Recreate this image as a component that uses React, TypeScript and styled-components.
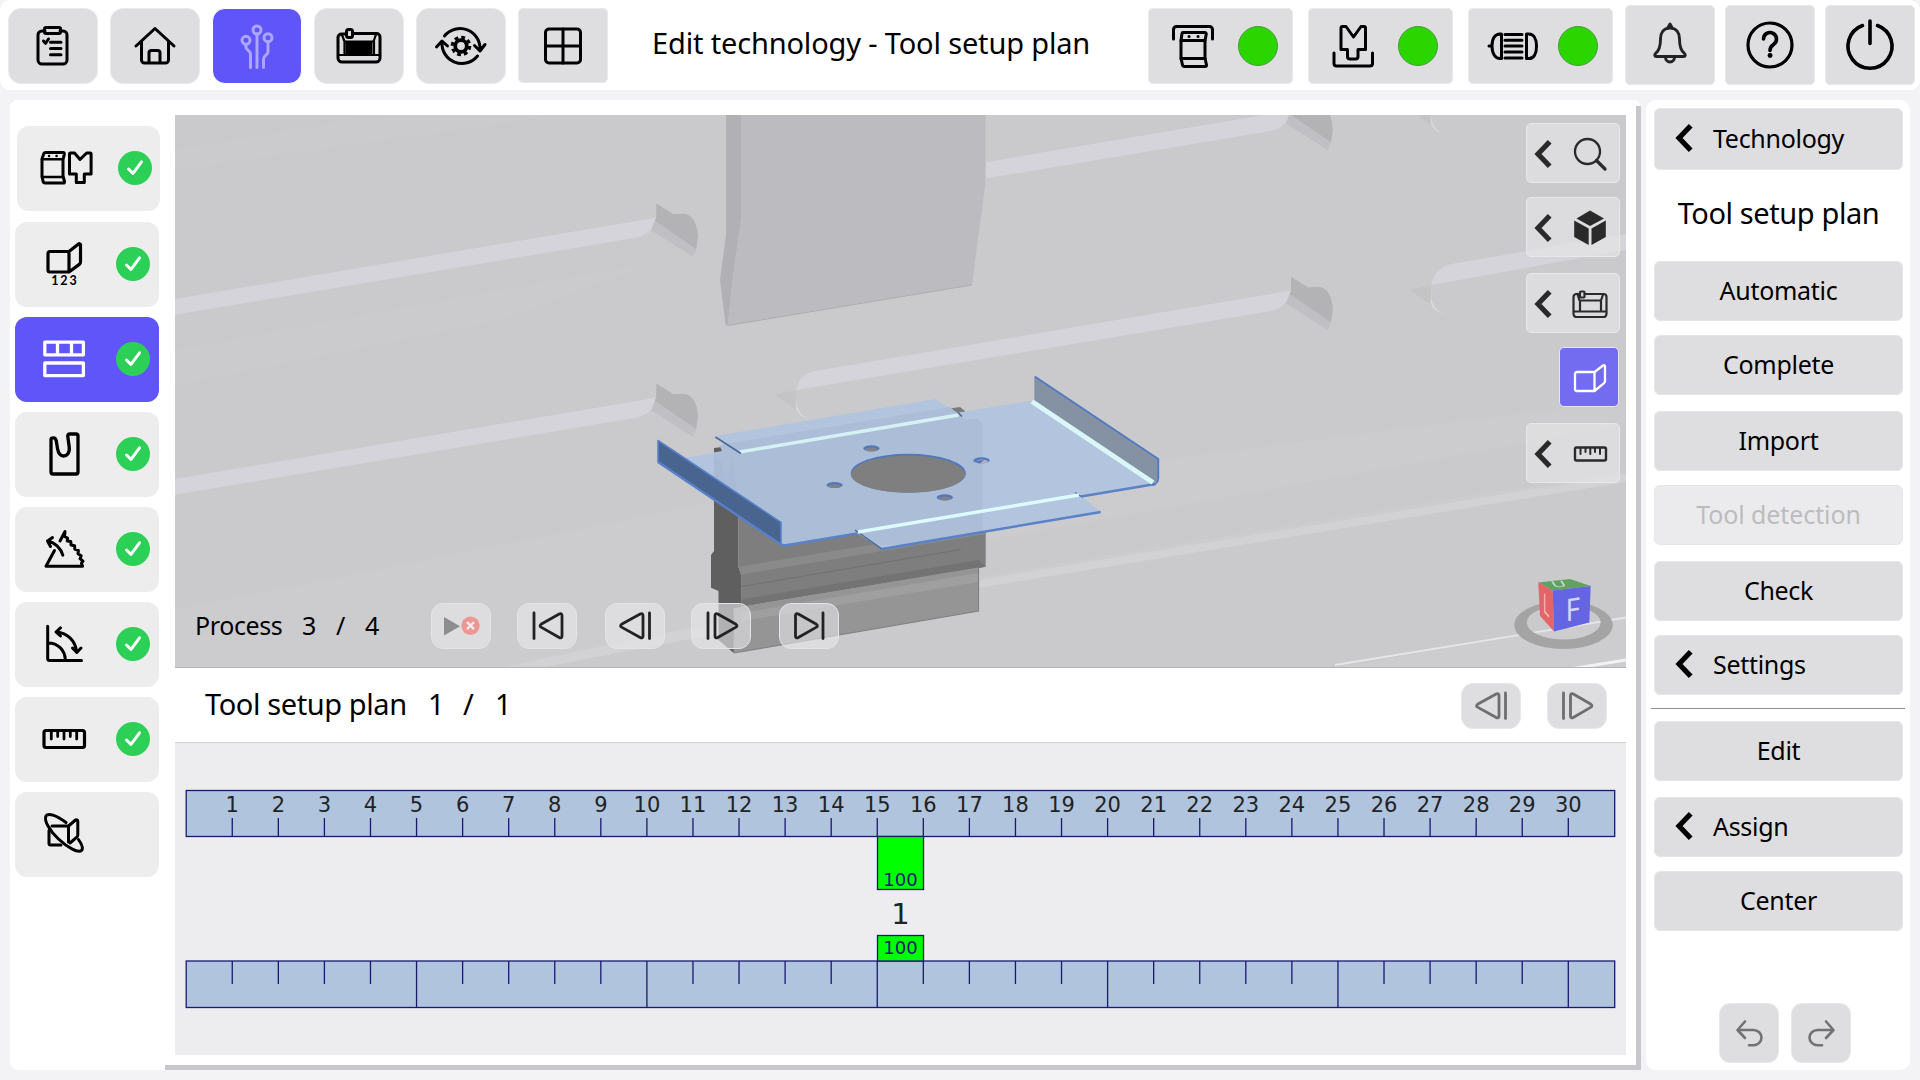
import React from "react";
import styled, { createGlobalStyle, css } from "styled-components";

const Global = createGlobalStyle`
  *, *::before, *::after { box-sizing: border-box; }
  html, body { margin: 0; padding: 0; background: #f3f3f6; }
  body { width: 1920px; height: 1080px; overflow: hidden; font-family: "Noto Sans", "Open Sans", sans-serif; color: #000; }
  button { font: inherit; color: inherit; padding: 0; margin: 0; }
  svg { display: block; flex: none; overflow: visible; }
`;

/* ---------- page frame ---------- */

const Page = styled.div`
  width: 1920px;
  height: 1080px;
  display: flex;
  flex-direction: column;
  background: #f3f3f6;
`;

const Header = styled.header`
  height: 90px;
  display: flex;
  align-items: flex-start;
  padding: 8px 5px 0 8px;
  background: #fff;
  border-radius: 10px;
`;

const NavGroup = styled.nav`
  display: flex;
  gap: 12px;
`;

const NavButton = styled.button<{ $active?: boolean; $square?: boolean }>`
  width: 90px;
  height: ${(p) => (p.$square ? 75 : 76)}px;
  display: grid;
  place-items: center;
  border: 1px solid ${(p) => (p.$active ? "#fff" : "#e9e9eb")};
  border-radius: ${(p) => (p.$square ? 5 : 13)}px;
  background: ${(p) => (p.$active ? "#5f55f8" : "#dedee0")};
  color: ${(p) => (p.$active ? "#aba6fb" : "#000")};
`;

const PageTitle = styled.h1`
  flex: 1;
  margin: 0;
  padding-left: 44px;
  font-weight: 400;
  font-size: 29px;
  line-height: 70px;
  letter-spacing: -0.16px;
  white-space: nowrap;
`;

const StatusGroup = styled.div`
  display: flex;
  gap: 15px;
  margin-right: 12px;
`;

const StatusButton = styled.button`
  width: 145px;
  height: 76px;
  display: flex;
  align-items: center;
  padding-left: 20px;
  gap: 21px;
  border: 1px solid #e9e9eb;
  border-radius: 5px;
  background: #dedee0;
`;

const Lamp = styled.span`
  width: 40px;
  height: 40px;
  border-radius: 50%;
  background: #2bd600;
  border: 1px solid #4b9a3a;
`;

const SystemGroup = styled.div`
  display: flex;
  gap: 10px;
  margin-top: -3px;
`;

const SystemButton = styled.button`
  width: 90px;
  height: 80px;
  display: grid;
  place-items: center;
  border: 1px solid #e9e9eb;
  border-radius: 5px;
  background: #dedee0;
`;

const Body = styled.main`
  display: flex;
  height: 970px;
  margin: 10px 10px 0;
`;

const Workspace = styled.section`
  display: flex;
  width: 1631px;
  background: #fff;
  border-radius: 8px 8px 0 8px;
`;

const Sidebar = styled.aside`
  width: 155px;
  padding: 26px 0 0 5px;
  display: flex;
  flex-direction: column;
  gap: 10px;
`;

const StepButton = styled.button<{ $active?: boolean; $first?: boolean }>`
  width: ${(p) => (p.$first ? 143 : 144)}px;
  height: 85px;
  margin-left: ${(p) => (p.$first ? 2 : 0)}px;
  margin-bottom: ${(p) => (p.$first ? 1 : 0)}px;
  padding: 0 0 1px 23px;
  display: flex;
  align-items: center;
  gap: 24px;
  border: 0;
  border-radius: 12px;
  background: ${(p) => (p.$active ? "#5f55f8" : "#ededed")};
  color: ${(p) => (p.$active ? "#fff" : "#000")};
`;

const Content = styled.div`
  width: 1476px;
  margin-top: 6px;
  padding: 9px 10px 0;
  border-right: 5px solid #c8c8cc;
  border-bottom: 5px solid #c8c8cc;
`;

/* ---------- 3D viewport ---------- */

const Viewport = styled.div`
  position: relative;
  width: 1451px;
  height: 553px;
  overflow: hidden;
  background: #cacacc;
  border-bottom: 1px solid #b4b4b7;
`;

const ViewTools = styled.div`
  position: absolute;
  top: 8px;
  right: 6px;
  display: flex;
  flex-direction: column;
  align-items: flex-end;
`;

const ViewButton = styled.button<{ $gap: number; $active?: boolean }>`
  width: ${(p) => (p.$active ? 60 : 94)}px;
  height: 60px;
  margin-top: ${(p) => p.$gap}px;
  margin-right: ${(p) => (p.$active ? 1 : 0)}px;
  display: flex;
  align-items: center;
  justify-content: flex-end;
  padding: 1px ${(p) => (p.$active ? 10 : 11)}px 0 0;
  gap: 20px;
  border: 1px solid #e8e8ea;
  border-radius: 5px;
  background: ${(p) => (p.$active ? "#736bf0" : "rgba(230, 230, 232, 0.62)")};
  color: ${(p) => (p.$active ? "#fff" : "#2a2a2a")};
`;

const Playback = styled.div`
  position: absolute;
  left: 20px;
  top: 488px;
  height: 46px;
  display: flex;
  align-items: center;
`;

const Label = styled.span<{ $w: number; $size: number; $ls?: number }>`
  width: ${(p) => p.$w}px;
  font-size: ${(p) => p.$size}px;
  line-height: 42px;
  padding-bottom: 2px;
  letter-spacing: ${(p) => p.$ls ?? 0}px;
  white-space: nowrap;
`;

const pill = css`
  width: 60px;
  height: 46px;
  display: grid;
  place-items: center;
  border-radius: 12px;
`;

const PlayButton = styled.button<{ $gap?: number }>`
  ${pill}
  margin-left: ${(p) => p.$gap ?? 0}px;
  border: 1px solid #e4e4e6;
  background: rgba(232, 232, 235, 0.6);
  color: #222;
`;

/* ---------- plan section ---------- */

const PlanHeader = styled.div`
  height: 75px;
  display: flex;
  align-items: flex-start;
  padding: 15px 19px 0 30px;
  border-bottom: 1px solid #cfcfd2;
`;

const PlanCaption = styled.div`
  flex: 1;
  display: flex;
`;

const PlanButton = styled.button`
  ${pill}
  margin-left: 26px;
  border: 1px solid #e8e8ea;
  background: #dedee0;
  color: #6e6e71;
`;

const PlanArea = styled.div`
  height: 312px;
  background: #ededef;
`;

/* ---------- right panel ---------- */

const Panel = styled.aside`
  width: 264px;
  margin-left: 5px;
  padding: 8px 5px 0;
  display: flex;
  flex-direction: column;
  background: #fff;
  border-radius: 10px;
`;

const PanelTitle = styled.h2`
  margin: 0;
  height: 91px;
  padding-left: 1px;
  text-align: center;
  font-weight: 400;
  font-size: 29px;
  line-height: 86px;
  letter-spacing: -0.4px;
`;

const PanelButton = styled.button<{ $gap?: number; $menu?: boolean; $tall?: boolean; $off?: boolean }>`
  width: 249px;
  height: ${(p) => (p.$tall ? 62 : 60)}px;
  margin: ${(p) => p.$gap ?? 0}px 0 0 3px;
  padding: 0 0 2px ${(p) => (p.$menu ? 20 : 0)}px;
  display: flex;
  align-items: center;
  justify-content: ${(p) => (p.$menu ? "flex-start" : "center")};
  gap: 20px;
  border: 1px solid #e6e6e8;
  border-radius: 6px;
  background: ${(p) => (p.$off ? "#ebebed" : "#dedee0")};
  color: ${(p) => (p.$off ? "#bcbcbf" : "#000")};
  font-size: 25px;
  letter-spacing: ${(p) => (p.$off ? -0.1 : -0.3)}px;
  line-height: 1;
`;

const Divider = styled.div`
  height: 1px;
  margin-top: 13px;
  background: #8e8e92;
`;

const HistoryRow = styled.div`
  display: flex;
  gap: 12px;
  margin: 72px 0 0 68px;
`;

const HistoryButton = styled.button`
  width: 60px;
  height: 60px;
  display: grid;
  place-items: center;
  border: 1px solid #e8e8ea;
  border-radius: 11px;
  background: #dedee0;
  color: #727275;
`;

/* ---------- icons ---------- */

type IconProps = { w?: number; h?: number; sw?: number; children: React.ReactNode };

const Icon = ({ w = 48, h = 48, sw = 3, children }: IconProps) => (
  <svg width={w} height={h} viewBox={`0 0 ${w} ${h}`} fill="none" stroke="currentColor" strokeWidth={sw} strokeLinecap="round" strokeLinejoin="round">
    {children}
  </svg>
);

const Clipboard = () => (
  <Icon>
    <path d="M16 9h-3a4 4 0 0 0-4 4v25a4 4 0 0 0 4 4h21a4 4 0 0 0 4-4V13a4 4 0 0 0-4-4h-3" />
    <rect x="15.5" y="5.5" width="16" height="6" rx="1.5" />
    <path d="M21.5 20.3H32M21.5 26.5H32M21.5 32.7H32M14.5 19l2 2.4 3-4.4" />
  </Icon>
);

const Home = () => (
  <Icon>
    <path d="M5 24 24 6.5 43 24M10.5 19.5V38a3 3 0 0 0 3 3h21a3 3 0 0 0 3-3V19.5M18 41V31a2.5 2.5 0 0 1 2.5-2.5h6A2.5 2.5 0 0 1 29 31v10" />
  </Icon>
);

const Circuit = () => (
  <Icon>
    <circle cx="13" cy="18.3" r="4" />
    <circle cx="24" cy="8" r="4" />
    <circle cx="35" cy="15.7" r="4" />
    <path d="M24 12v33.5M13 22.5v3c0 2 4.5 3.500 4.500 6.500v13.500M35 20v10c0 3-4.500 3.500-4.500 7v8.500" />
  </Icon>
);

const MachineFilled = () => (
  <Icon>
    <path d="M11 12H6.500a3.500 3.500 0 0 0-3.500 3.500V36a4 4 0 0 0 4 4h34a4 4 0 0 0 4-4V15a3.500 3.500 0 0 0-3.500-3.500H18" />
    <path d="M7 13l2.500 6.500h29L41 12.500M3 33h42M9.500 19v13M39 19v13" strokeWidth="2.200" />
    <rect x="11.500" y="7.500" width="6" height="8" rx="2" />
    <rect x="10.500" y="20" width="27" height="13" fill="currentColor" stroke="none" />
  </Icon>
);

const GearCycle = () => (
  <Icon>
    <path d="M7.500 14A20 20 0 0 1 43 28M37.500 23.500l5.500 5.500 5-6.500M40.500 34A20 20 0 0 1 5 20M-.5 25 5 19l5.500 5" />
    <circle cx="24" cy="24" r="5.800" strokeWidth="3.800" />
    <circle cx="24" cy="24" r="8.800" strokeWidth="3" strokeDasharray="3.800 3.112" strokeLinecap="butt" />
  </Icon>
);

const Windows = () => (
  <Icon>
    <rect x="6.500" y="7" width="35" height="34" rx="3.500" />
    <path d="M24 7v34M6.500 24h35" />
  </Icon>
);

const PressBody = () => (
  <>
    <path d="M14 10.500h21.500c1.500 0 2 1 1.700 2L36 18.500V36l1.500 7c.2.900-.3 1.500-1.200 1.500H15.500c-1.200 0-1.800-.6-2-1.500L12 36V18.500l1-7c.1-.7.500-1 1-1Z" />
    <path d="M12 18.500h24M12 36.500h24" />
    <path d="M20 14.500h.1M29 14.500h.1" strokeWidth="3" />
  </>
);

const UpperTool = () => (
  <Icon>
    <path d="M4.500 17V7.500a3 3 0 0 1 3-3h33a3 3 0 0 1 3 3V17" />
    <PressBody />
  </Icon>
);

const LowerTool = () => (
  <Icon>
    <path d="M12 6v21.500h6.500v7a2.500 2.500 0 0 0 2.500 2.500h5.500a2.500 2.500 0 0 0 2.500-2.500v-7h7.500V6a1.500 1.500 0 0 0-1.500-1.500h-3L24.500 15 17 4.500h-3.500A1.500 1.500 0 0 0 12 6ZM5 31v10.500A2.500 2.500 0 0 0 7.500 44h33.500a2.500 2.500 0 0 0 2.500-2.500V31" />
  </Icon>
);

const Motor = () => (
  <Icon>
    <path d="M12.500 12H11C6.500 12 3 16 3 24s3.500 12.500 8 12.500h1.500ZM0 24h3M37.500 12H40c4.500 0 7.500 4.500 7.500 12.300S44.500 36.500 40 36.500h-2.500Z" />
    <path d="M16 12.500h17M16 18.200h17M16 24h17M16 30h17M16 36h17" />
  </Icon>
);

const Bell = () => (
  <Icon sw={2.9}>
    <g stroke="#222">
      <path d="M21.500 7.500 24 3l2.500 4.500M24 7c-6.500 0-9.500 5-9.500 11 0 8-1.500 12-5 14.500-1.200 1-1 3 .8 3h27.400c1.800 0 2-2 .8-3-3.500-2.500-5-6.500-5-14.500 0-6-3-11-9.500-11Z" />
      <path d="M19.500 36c0 3 2 5 4.500 5s4.500-2 4.500-5" />
    </g>
  </Icon>
);

const Help = () => (
  <Icon sw={3.2}>
    <circle cx="24" cy="24" r="22" />
    <path d="M17.500 18a6.500 6.500 0 1 1 10 5.500c-2.500 1.700-3.500 3-3.500 6" strokeWidth="3.600" />
    <path d="M24 34.500h.1" strokeWidth="4.800" />
  </Icon>
);

const Power = () => (
  <Icon sw={3.6}>
    <path d="M16.500 4.500a22 22 0 1 0 15 0M24 0v22.500" />
  </Icon>
);

const StepTools = () => (
  <Icon w={54}>
    <path d="M5.500 8.500h17.500c1.200 0 1.500.8 1.300 1.800L23 15.500V32l1.500 5.500c.2 1-.3 1.500-1.300 1.500H5c-1 0-1.600-.5-1.900-1.500L2 32.500V15l1.800-5.500c.3-.7.800-1 1.700-1Z" />
    <path d="M2 15.300h21M2 33h21M9 12h.1M16.500 12h.1" strokeWidth="2.500" />
    <path d="M29.500 10v20h6.800v8.500h8v-8.500h6.800V10a1 1 0 0 0-1-1h-3.500L40 15.500 34.500 9h-4a1 1 0 0 0-1 1Z" />
  </Icon>
);

const StepNumbers = () => (
  <Icon w={54} sw={3.200}>
    <path d="M31 11.500H12a2 2 0 0 0-2 2V30a2 2 0 0 0 2 2h19V11.500l9.500-7.500a1.200 1.200 0 0 1 2 1v17a3 3 0 0 1-1.200 2.400L31 32" />
    <text x="27" y="44.800" textAnchor="middle" fontFamily="Lato, sans-serif" fontSize="12.500" fontWeight="700" letterSpacing="2" fill="currentColor" stroke="none">123</text>
  </Icon>
);

const StepPlan = () => (
  <Icon w={54} sw={3.3}>
    <path d="M6.800 7.200h38.600v12.600H6.800ZM19.500 7.200v12.600M33.500 7.200v12.600M6.800 28h38.600v12.600H6.800Z" />
  </Icon>
);

const StepBend = () => (
  <Icon w={54} sw={3.300}>
    <path d="M13 9.500V42a2 2 0 0 0 2 2h23a2 2 0 0 0 2-2V6a2 2 0 0 0-2-2h-6c-2 0-2.500 1-2.200 2.500l1.400 10.500c.8 6-2.200 9-5.700 9s-5.200-3-6-7.500l-1.200-7.500C17.700 8.500 17 7.800 15.500 7.800S13 8 13 9.500Z" />
  </Icon>
);

const StepSaw = () => (
  <Icon w={54}>
    <path d="M16.500 25.500 8 41.200h36.500l-1-3 1.500-2-3-2.500 1.200-3-3.200-2 .4-3.200-3.600-1.300-.2-3.400-3.600-.8-.2-3.400-3.600-.5L29.500 13l-3-1.500L27 6.500l-5 9.500M24.800 30.200C23 23.500 17 17.500 10 16.200M14.500 12.500 9.500 16l3 5.500" />
  </Icon>
);

const StepAngle = () => (
  <Icon w={54}>
    <path d="M9.700 6.200v32.300a2 2 0 0 0 2 2H43.500M10.300 23c9.500 0 16.500 7 17 16.500M18.500 12c11 1 19 9 20 19.500M22.500 7.800 18 12l4.500 4M34.500 28l4.300 4.500L43 28" />
  </Icon>
);

const StepRuler = () => (
  <Icon w={54} sw={3.200}>
    <rect x="6" y="15.500" width="40.500" height="17" rx="2" />
    <path d="M13.300 16v8M19.700 16v5.500M26 16v8M32.300 16v5.500M38.700 16v8" strokeWidth="2.800" />
  </Icon>
);

const StepOrbit = () => (
  <Icon w={54}>
    <path d="M14 16h16.500v16M30.500 16l7-6a1.500 1.500 0 0 1 2.300 1.200V25a3 3 0 0 1-1 2.200l-6.800 5.800M11 20.500v13a1.500 1.500 0 0 0 1.500 1.500H23" />
    <path d="M28 12.500C18 5 10 2.500 8 6c-2.500 4.500 4 15 12.500 23s19.500 14.500 23 11.500c2-1.800.8-5.500-3-11" />
  </Icon>
);

const CheckBadge = () => (
  <svg width="34" height="34" viewBox="0 0 34 34">
    <circle cx="17" cy="17" r="17" fill="#2dd057" />
    <path d="m10.500 18 4.500 4.300 8.500-11.500" fill="none" stroke="#fff" strokeWidth="3" strokeLinecap="round" strokeLinejoin="round" />
  </svg>
);

const Chevron = () => (
  <svg width="18" height="28" viewBox="0 0 18 28">
    <path d="M15.700 1.700 4 14l11.700 12.300" fill="none" stroke="currentColor" strokeWidth="5.200" />
  </svg>
);

const ViewSearch = () => (
  <Icon w={36} h={36} sw={2.300}>
    <circle cx="15.500" cy="15.500" r="12.500" />
    <path d="m24.500 24.500 8.500 8.500" strokeWidth="3.200" />
  </Icon>
);

const ViewCube = () => (
  <Icon w={36} h={36} sw={0}>
    <path d="M18 .500 32 8.500 18 16 4.500 8.500ZM2.200 10.500 16.700 18.500v16.500L2.200 27ZM33.800 10.500 19.500 18.500v16.500l14.300-8Z" fill="currentColor" stroke="none" />
  </Icon>
);

const ViewMachine = () => (
  <Icon w={36} h={36} sw={2.200}>
    <path d="M8 8H4.500A3 3 0 0 0 1.500 11v17a3 3 0 0 0 3 3h27a3 3 0 0 0 3-3V11a3 3 0 0 0-3-3H13M5.500 8l2 6.500H29L31 8.500M1.500 25.500h33M8 15v10M29 15v10" />
    <rect x="8" y="5.500" width="4.500" height="6" rx="1" />
  </Icon>
);

const ViewPart = () => (
  <Icon w={36} h={36} sw={2.300}>
    <path d="M22.500 12H5a2 2 0 0 0-2 2v15a2 2 0 0 0 2 2h17.500V12l8.500-6.500a1.200 1.200 0 0 1 2 1V21a3 3 0 0 1-1.200 2.400L22.500 31" />
  </Icon>
);

const ViewRuler = () => (
  <Icon w={36} h={36} sw={2.400}>
    <rect x="3" y="11.500" width="31" height="13" rx="1.500" />
    <path d="M8.500 12v6M13.500 12v4M18.300 12v6M23 12v4M28 12v6" strokeWidth="2" />
  </Icon>
);

const PlayIcon = ({ bar, left, tip }: { bar: number; left: number; tip: number }) => (
  <svg width="58" height="44" viewBox="1 1 58 44" fill="none" stroke="currentColor" strokeWidth="2.800" strokeLinecap="round" strokeLinejoin="round">
    <path d={`M${bar} 10v25.500`} />
    <path
      d={
        left > tip
          ? `M${left} 12.500c0-2-1.200-2.400-2.800-1.500L${tip + 1} 21.300c-1.200.8-1.200 2 0 2.800L${left - 2.8} 34.500c1.600.9 2.800.5 2.800-1.500Z`
          : `M${left} 12.500c0-2 1.200-2.400 2.800-1.500L${tip - 1} 21.300c1.200.8 1.200 2 0 2.800L${left + 2.8} 34.500c-1.600.9-2.800.5-2.800-1.500Z`
      }
    />
  </svg>
);

const PlayStop = () => (
  <svg width="58" height="44" viewBox="1 1 58 44">
    <path d="M13 14v18.500l16-9.200Z" fill="#8d8d8f" />
    <circle cx="39.500" cy="22.800" r="9.200" fill="#ec9793" />
    <path d="m36 19.200 7 7m0-7-7 7" stroke="#f5e9ea" strokeWidth="2.400" />
  </svg>
);

const Undo = ({ flip }: { flip?: boolean }) => (
  <svg width="58" height="58" viewBox="1 1 58 58" fill="none" stroke="currentColor" strokeWidth="2.600" strokeLinecap="round" strokeLinejoin="round">
    <path transform={flip ? "translate(61 0) scale(-1 1)" : undefined} d="M26 18.500 18.500 27l7.500 8M19 27h15.500c4.500 0 8 3.500 8 7.500s-3.500 7.800-8 7.800H30" />
  </svg>
);

/* ---------- 3D scene ---------- */

const SlotEnd = ({ x, y }: { x: number; y: number }) => (
  <g transform={`translate(${x} ${y})`}>
    <path d="M0 0 17 11 27 10.400C36 10.500 41.500 20 41.800 33.500L40 46-1.500 18 0 14Z" fill="#b3b3b5" />
    <path d="M-1.500 17.500 40 46 36.500 53.500-5 27Z" fill="#c0bfc4" />
  </g>
);

const SlotStart = ({ x, y }: { x: number; y: number }) => (
  <g transform={`translate(${x} ${y})`}>
    <path d="M-22 4.500 0 0v20Z" fill="#c4c4c5" />
    <path d="M0 0-.8 17C0 23 6 29 18 30l-5-.5C7 27 1 21 0 14Z" fill="#d9d9dc" />
  </g>
);

const Scene = () => (
  <svg width="1451" height="553" viewBox="175 115 1451 553">
    <defs>
      <clipPath id="plateClip">
        <path d="M683 458 722 451 715.400 436 935.500 399 962 412 1030.800 400.700 1155.500 483.300 1081 496 1100 512 882 549 857 533 783 545.700 658 462Z" />
      </clipPath>
    </defs>
    <rect x="175" y="115" width="1451" height="553" fill="#cacacc" />
    <path d="M175 350 500 290 656 262 500 320 175 385ZM175 150 380 115H560L175 170Z" fill="#cbcbcd" />
    <path d="M175 610 700 505 1160 460 1626 400V474L960 583 498 668H175Z" fill="#ccccce" />
    <path d="M960 545 1626 425V470L960 580Z" fill="#cacacc" />
    <path d="M498 668 700 626 960 583 1626 474V482L960 591 700 637 540 668Z" fill="#d2d2d4" />
    <path d="M1335 668 1626 617V668Z" fill="#cdcdcf" />
    <path d="M1335 665 1626 617.500" stroke="#e6e6e8" strokeWidth="1.800" />
    <path d="M1570 669 1626 660" stroke="#f2f2f4" strokeWidth="3" />

    {[0, 180].map((dy) => (
      <g key={dy} transform={`translate(0 ${dy})`}>
        <path d="M175 299 655.700 217.700C654.500 229 647 236 634 238L175 314.700Z" fill="#d5d4da" />
        <SlotEnd x={656.200} y={203.300} />
      </g>
    ))}
    {[-180, 0].map((dy) => (
      <g key={dy} transform={`translate(0 ${dy})`}>
        <path d="M815 371 1290.500 290.500C1289 302 1282 309 1268 311.500L796.500 390C798 380 804 373 815 371Z" fill="#d5d4da" />
        <SlotEnd x={1291} y={276.400} />
        <SlotStart x={796.500} y={390} />
        <path d="M1454 263.600 1626 234V250L1431.400 285C1433 274 1440 266 1454 263.600Z" fill="#d5d4da" />
        <SlotStart x={1431.400} y={285} />
      </g>
    ))}

    <path d="M726 115H741V220L733 276.700 727.700 325.700 725.600 325 720 280 726 235Z" fill="#b1b1b5" />
    <path d="M741 115H985.600V181.400L972 285 727.700 325.700 733 276.700 741 220Z" fill="#bcbbc0" />
    <path d="M727.700 325.500 972 285" stroke="#adadb1" strokeWidth="1" />

    <path d="M714 448 951.600 408.300 960 407 965 411V420L738 462Z" fill="#7b7b7b" />
    <path d="M714 448H738.500V566.700L741.600 576.700V606.700L733.700 653 718.500 640V591L711 587.700V555L714 551Z" fill="#5f5f5f" />
    <path d="M738.500 460 982.600 425 985.700 533V566.700L741.600 606.700V576.700L738.500 566.700Z" fill="#7e7e7e" />
    <path d="M738.500 566.700 985.700 526V534L741 574.500Z" fill="#8a8a8a" />
    <path d="M741.600 586.500 961 549.500" stroke="#707070" strokeWidth="1" />
    <path d="M741.600 599.500 978.500 560 985.700 566.700 741.600 606.700Z" fill="#737373" />
    <path d="M733.700 608 978.500 567.500V611L733.700 653Z" fill="#959595" />
    <path d="M741.600 613 978.500 573V582L741.600 621Z" fill="#9f9f9f" />
    <path d="M733.700 653 978.500 611V568" stroke="#828282" strokeWidth="1.200" fill="none" />

    <path d="M683 458 1030.800 400.700 1155.500 483.300 783 545.700 658 462Z" fill="#b3c5de" />
    <path d="M715.400 436 935.500 399 962 416 741 453.300Z" fill="#b3c5de" />
    <path d="M855 530 1077.300 493.300 1100.700 511.700 882 549Z" fill="#b3c5de" />
    <g clipPath="url(#plateClip)">
      <path d="M714 446 950 407 965 420 976 419Q982.600 420 982.600 428V545H714Z" fill="#abbdd7" />
      <path d="M722 462 726 485 732 458 738 500V545H714V458Z" fill="#a6b8d3" opacity=".6" />
    </g>
    <path d="M739.500 452 958.500 415" stroke="#d6f1f3" strokeWidth="3.400" />
    <path d="M715.400 437 741 453.500M958 412.500 962 416.500" stroke="#46679e" strokeWidth="1.500" />
    <path d="M783 545.700 857 533.500M1081 496.500 1155.500 484M882 549 1100.700 512" stroke="#5a82c6" strokeWidth="2.400" />
    <path d="M855 530 882 549M1075 492.500 1081 496.500" stroke="#46679e" strokeWidth="1.500" />
    <path d="M858 532 1079 495" stroke="#dcfbfc" strokeWidth="3.400" />

    <ellipse cx="908.300" cy="473.300" rx="57.500" ry="19.500" fill="#5079bd" />
    <path d="M850.800 474.500C853 463 878 455.800 908.300 455.800S962 463 965.500 474.500C964 485 939 492.700 908.300 492.700S852 485 850.800 474.500Z" fill="#7f7f7f" />
    {[[871.400, 448.300], [834.600, 485], [944.800, 497.300], [981.600, 460.300]].map(([cx, cy]) => (
      <g key={cx}>
        <ellipse cx={cx} cy={cy} rx="8.200" ry="3" fill="#5079bd" />
        <ellipse cx={cx} cy={cy + 1.200} rx="6.500" ry="1.900" fill={cx > 980 ? "#b4b4b8" : "#7f8288"} />
      </g>
    ))}
    <path d="M972.500 461 980 463.500 984 460" fill="#5079bd" />

    <path d="M658 440.500 781 522.300V544.500L658 462Z" fill="#48648f" stroke="#5781cc" strokeWidth="1.600" strokeLinejoin="round" />
    <path d="M658 462 781 544.500 786 545.500" stroke="#5781cc" strokeWidth="2.200" fill="none" />
    <path d="M1034.300 376.700 1158.300 459V480L1152 484 1034.300 402Z" fill="#8592a3" />
    <path d="M1032 401.500 1153 482.500" stroke="#d9f7f8" strokeWidth="4.800" />
    <path d="M1034.800 376.500 1158.300 459V478Q1158 484 1152 485" stroke="#5079c4" strokeWidth="1.800" fill="none" />

    <path fillRule="evenodd" d="M1514.300 625a49.200 24 0 1 0 98.400 0a49.200 24 0 1 0-98.400 0ZM1526.700 622.500a37 17 0 1 0 74 0a37 17 0 1 0-74 0Z" fill="#a4a4a4" />
    <path d="M1538.300 582.400 1570 579 1590.700 586 1552.700 590.600Z" fill="#61a263" />
    <path d="M1538.300 582.400 1552.700 590.600 1554 631.600 1540 615.800Z" fill="#e46467" />
    <path d="M1552.700 590.600 1590.700 586 1589.300 622.600 1554 631.600Z" fill="#6565e3" />
    <g fontFamily="Noto Sans, sans-serif" fill="#d4d4f4">
      <text transform="matrix(0.900 -0.140 0 1 1565.500 621.500)" fontSize="31">F</text>
      <text transform="matrix(0.450 0.500 0 1 1543 611)" fontSize="27" fill="#f0c0c4">L</text>
      <text transform="matrix(1.700 -0.120 0.500 0.720 1553.500 587.500)" fontSize="11.500" fill="#c4e0c6">U</text>
    </g>
  </svg>
);

/* ---------- bed ruler ---------- */

const STEP = 46.07;
const divisions = Array.from({ length: 30 }, (_, i) => i + 1);

const BedRuler = () => (
  <svg width="1451" height="312" viewBox="175 743 1451 312" fontFamily="'DejaVu Sans', Verdana, sans-serif" textAnchor="middle">
    <g fill="#b0c4de" stroke="#191970" strokeWidth="1.300">
      <rect x="186.200" y="790.500" width="1428.500" height="46" />
      <rect x="186.200" y="961" width="1428.500" height="46.500" />
    </g>
    <g fill="#00ff00" stroke="#191970" strokeWidth="1.300">
      <rect x="877.500" y="836.500" width="46" height="53" />
      <rect x="877.500" y="935.500" width="46" height="25.500" />
    </g>
    {divisions.map((n) => {
      const x = 186.200 + n * STEP;
      return (
        <g key={n}>
          <path d={`M${x} 818V836.500M${x} 961V${n % 5 === 0 ? 1007.500 : 984}`} stroke="#191970" strokeWidth="1.300" />
          <text x={x} y="811.700" fontSize="21" fill="#222">{n}</text>
        </g>
      );
    })}
    <g fill="#191970" fontSize="18">
      <text x="900.500" y="885.700">100</text>
      <text x="900.500" y="954">100</text>
    </g>
    <text x="900.500" y="924" fontSize="29" fill="#222">1</text>
  </svg>
);

/* ---------- application ---------- */

const navItems = [
  { icon: <Clipboard /> },
  { icon: <Home /> },
  { icon: <Circuit />, active: true },
  { icon: <MachineFilled /> },
  { icon: <GearCycle /> },
  { icon: <Windows />, square: true },
];

const steps = [
  { icon: <StepTools />, done: true },
  { icon: <StepNumbers />, done: true },
  { icon: <StepPlan />, done: true, active: true },
  { icon: <StepBend />, done: true },
  { icon: <StepSaw />, done: true },
  { icon: <StepAngle />, done: true },
  { icon: <StepRuler />, done: true },
  { icon: <StepOrbit />, done: false },
];

const statuses = [<UpperTool />, <LowerTool />, <Motor />];
const system = [<Bell />, <Help />, <Power />];

export default function App() {
  return (
    <Page>
      <Global />
      <Header>
        <NavGroup>
          {navItems.map((n, i) => (
            <NavButton key={i} $active={n.active} $square={n.square}>{n.icon}</NavButton>
          ))}
        </NavGroup>
        <PageTitle>Edit technology - Tool setup plan</PageTitle>
        <StatusGroup>
          {statuses.map((icon, i) => (
            <StatusButton key={i}>{icon}<Lamp /></StatusButton>
          ))}
        </StatusGroup>
        <SystemGroup>
          {system.map((icon, i) => (
            <SystemButton key={i}>{icon}</SystemButton>
          ))}
        </SystemGroup>
      </Header>
      <Body>
        <Workspace>
          <Sidebar>
            {steps.map((s, i) => (
              <StepButton key={i} $active={s.active} $first={i === 0}>
                {s.icon}
                {s.done && <CheckBadge />}
              </StepButton>
            ))}
          </Sidebar>
          <Content>
            <Viewport>
              <Scene />
              <ViewTools>
                <ViewButton $gap={0}><Chevron /><ViewSearch /></ViewButton>
                <ViewButton $gap={14}><Chevron /><ViewCube /></ViewButton>
                <ViewButton $gap={16}><Chevron /><ViewMachine /></ViewButton>
                <ViewButton $gap={14} $active><ViewPart /></ViewButton>
                <ViewButton $gap={16}><Chevron /><ViewRuler /></ViewButton>
              </ViewTools>
              <Playback>
                <Label $w={107} $size={25} $ls={-0.4}>Process</Label>
                <Label $w={34} $size={25}>3</Label>
                <Label $w={29} $size={25}>/</Label>
                <Label $w={66} $size={25}>4</Label>
                <PlayButton><PlayStop /></PlayButton>
                <PlayButton $gap={26}><PlayIcon bar={17} left={45} tip={23} /></PlayButton>
                <PlayButton $gap={28}><PlayIcon bar={44.5} left={38} tip={15.5} /></PlayButton>
                <PlayButton $gap={26}><PlayIcon bar={17} left={24} tip={46} /></PlayButton>
                <PlayButton $gap={28}><PlayIcon bar={44} left={16.5} tip={38.5} /></PlayButton>
              </Playback>
            </Viewport>
            <PlanHeader>
              <PlanCaption>
                <Label $w={223} $size={29} $ls={-0.4}>Tool setup plan</Label>
                <Label $w={35} $size={29}>1</Label>
                <Label $w={32} $size={29}>/</Label>
                <Label $w={30} $size={29}>1</Label>
              </PlanCaption>
              <PlanButton><PlayIcon bar={44.5} left={38} tip={15.5} /></PlanButton>
              <PlanButton><PlayIcon bar={16.5} left={23.500} tip={45} /></PlanButton>
            </PlanHeader>
            <PlanArea><BedRuler /></PlanArea>
          </Content>
        </Workspace>
        <Panel>
          <PanelButton $menu $tall><Chevron />Technology</PanelButton>
          <PanelTitle>Tool setup plan</PanelTitle>
          <PanelButton>Automatic</PanelButton>
          <PanelButton $gap={14}>Complete</PanelButton>
          <PanelButton $gap={16}>Import</PanelButton>
          <PanelButton $gap={14} $off>Tool detection</PanelButton>
          <PanelButton $gap={16}>Check</PanelButton>
          <PanelButton $gap={14} $menu><Chevron />Settings</PanelButton>
          <Divider />
          <PanelButton $gap={12}>Edit</PanelButton>
          <PanelButton $gap={16} $menu><Chevron />Assign</PanelButton>
          <PanelButton $gap={14}>Center</PanelButton>
          <HistoryRow>
            <HistoryButton><Undo /></HistoryButton>
            <HistoryButton><Undo flip /></HistoryButton>
          </HistoryRow>
        </Panel>
      </Body>
    </Page>
  );
}
